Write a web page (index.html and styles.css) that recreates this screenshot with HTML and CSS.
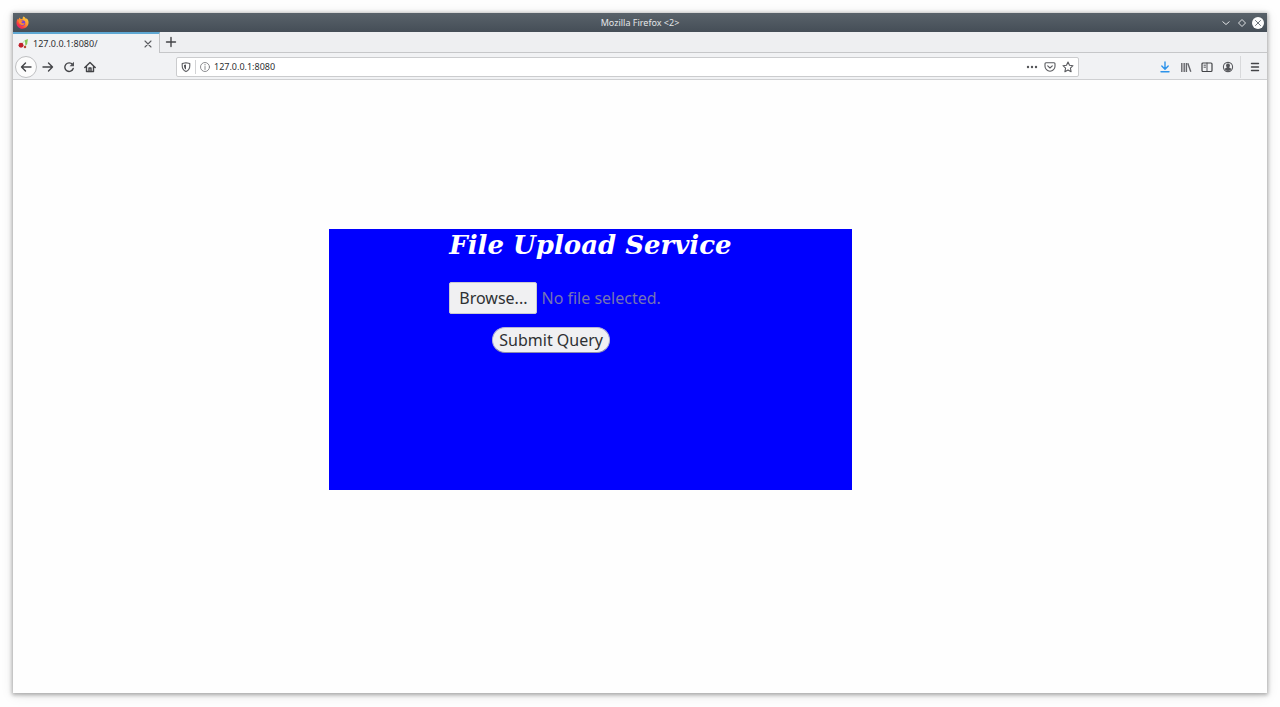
FILE: index.html
```html
<!DOCTYPE html>
<html lang="en">
<head>
<meta charset="utf-8">
<meta name="viewport" content="width=device-width, initial-scale=1">
<title>File Upload Service</title>
<link rel="stylesheet" href="styles.css">
</head>
<body>
<div class="window">
  <header class="titlebar">
    <svg class="logo" viewBox="0 0 16 16" aria-hidden="true">
      <defs>
        <linearGradient id="fire" x1="1" y1="0" x2="0.2" y2="1">
          <stop offset="0" stop-color="#ffe64a"/><stop offset="0.45" stop-color="#ff9a2e"/><stop offset="0.8" stop-color="#f8393f"/><stop offset="1" stop-color="#e31587"/>
        </linearGradient>
      </defs>
      <path fill="url(#fire)" d="M9.2.6c1.8 1 2.600 2 3 3.100.5-.1.700-.4.700-.9C14.900 4.500 15.700 6.600 15.400 9c-.5 4-3.700 6.600-7.500 6.600C3.700 15.600.6 12.500.6 8.500c0-2.100.7-4 1.700-5.200 0 .6.2 1 .5 1.300C3.200 3.400 4 2.400 4.900 1.900c0 .9.300 1.500.9 1.900L8 4.100C8 2.900 8.300 1.500 9.200.6Z"/>
      <circle cx="8" cy="8.600" r="3.400" fill="#7542d8"/>
      <path fill="#ff8b2c" d="M3.200 5.300c1.500-.7 3-.4 4 .5l1.500.1c-.2 1-1.800 1.200-1.900 1.700-.1.900.8 1.700 2 1.400 1-.2 1.500-.3 1.900.1-.7 1.600-2.400 2.300-4 1.900C4.500 10.500 3.100 8.500 3.200 5.300Z"/>
    </svg>
    <div class="window-title">Mozilla Firefox &lt;2&gt;</div>
    <div class="window-controls">
      <button aria-label="Minimize"><svg viewBox="0 0 12 12"><path d="m2.500 4.500 3.500 3 3.500-3"/></svg></button>
      <button aria-label="Maximize"><svg viewBox="0 0 12 12"><path d="m6 2.500 3.500 3.500L6 9.500 2.500 6Z"/></svg></button>
      <button aria-label="Close"><svg viewBox="0 0 12 12"><circle class="disc" cx="6" cy="6" r="6"/><path class="cross" d="m3.200 3.200 5.600 5.600m0-5.600L3.200 8.800"/></svg></button>
    </div>
  </header>

  <nav class="tabs" aria-label="Tabs">
    <div class="tab">
      <svg class="favicon" viewBox="0 0 12 12" aria-hidden="true">
        <path d="M3.500 7C5 5.500 6 3.500 8.500 2.500" fill="none" stroke="#a9cf8c" stroke-width=".8"/>
        <path d="M7.500 2.500 10.800 1 10 6.500 8.200 9Z" fill="#85c653"/>
        <circle cx="3.300" cy="7.800" r="2.700" fill="#c0202b"/><circle cx="7.600" cy="9.800" r="1.400" fill="#b84a38"/>
      </svg>
      <span class="tab-title">127.0.0.1:8080/</span>
      <button aria-label="Close tab"><svg class="icon thin" viewBox="0 0 12 12"><path d="m3 3 6 6m0-6L3 9"/></svg></button>
    </div>
    <button class="new-tab" aria-label="New tab"><svg class="icon" viewBox="0 0 12 12"><path d="M6 1.500v9M1.500 6h9"/></svg></button>
  </nav>

  <div class="toolbar">
    <div class="navigation">
      <button class="back" aria-label="Back"><svg class="icon" viewBox="0 0 12 12"><path d="M11 6H1.500M5.500 2l-4 4 4 4"/></svg></button>
      <button aria-label="Forward"><svg class="icon" viewBox="0 0 12 12"><path d="M1 6h9.500M6.500 2l4 4-4 4"/></svg></button>
      <button aria-label="Reload"><svg class="icon" viewBox="0 0 12 12"><path d="M9.500 3.500A4.300 4.300 0 1 0 10.200 7.500"/><path class="solid" d="M11 .8v4.400H6.600Z"/></svg></button>
      <button aria-label="Home"><svg class="icon" viewBox="0 0 12 12"><path d="m.8 6.500 5.200-5 5.200 5M2.500 5.500v5h7v-5"/><path d="M5 10.500V7h2v3.500"/></svg></button>
    </div>
    <div class="address">
      <button aria-label="Tracking protection"><svg class="icon thin" viewBox="0 0 12 12"><path d="M6 1.700 9.800 2.500v2.300C9.800 7.600 8.600 9.500 6 10.600 3.400 9.500 2.200 7.600 2.200 4.800V2.500Z"/><path class="solid" d="M6 3.400v5.200C4.600 7.800 4 6.500 4 3.900Z"/></svg></button>
      <span class="divider"></span>
      <button aria-label="Site information"><svg class="icon hairline" viewBox="0 0 12 12"><circle cx="6" cy="6" r="4.500"/><path d="M6 5.500v3M6 3.400v.6"/></svg></button>
      <input class="url" type="text" value="127.0.0.1:8080" aria-label="Address">
      <div class="page-actions">
        <button aria-label="Page actions"><svg class="icon" viewBox="0 0 12 12"><g class="solid"><circle cx="2" cy="6" r="1.200"/><circle cx="6" cy="6" r="1.200"/><circle cx="10" cy="6" r="1.200"/></g></svg></button>
        <button aria-label="Save to Pocket"><svg class="icon thin" viewBox="0 0 12 12"><path d="M2 1.800h8q1 0 1 1v2.400a5 5 0 0 1-10 0V2.800q0-1 1-1ZM3.700 4.800 6 7l2.300-2.200"/></svg></button>
        <button aria-label="Bookmark"><svg class="icon thin" viewBox="0 0 12 12"><path d="m6 1 1.500 3.300 3.500.4-2.600 2.400.7 3.600L6 8.900l-3.100 1.800.7-3.600L1 4.700l3.500-.4Z"/></svg></button>
      </div>
    </div>
    <div class="tools">
      <button aria-label="Downloads"><svg class="icon download" viewBox="0 0 12 12"><path d="M6 1v7M2.800 5 6 8.200 9.200 5M2 10.800h8"/></svg></button>
      <button aria-label="Library"><svg class="icon library" viewBox="0 0 12 12"><path d="M1.800 2v9M4.200 2v9M6.400 2v9M7.800 2.200l3 8.600"/></svg></button>
      <button aria-label="Sidebars"><svg class="icon sidebar" viewBox="0 0 12 12"><rect x="1" y="2" width="10" height="8.500" rx="1"/><path class="detail" d="M6 2v8.500M3 4.200h1.500M3 6.200h1.500"/></svg></button>
      <button aria-label="Account"><svg class="icon thin" viewBox="0 0 12 12"><circle cx="6" cy="6" r="4.600"/><path class="solid" d="M6 2.500a2 2 0 0 1 1.400 3.400v.8l2.200 1A4 4 0 0 1 2.400 7.700l2.200-1v-.8A2 2 0 0 1 6 2.500Z"/></svg></button>
      <button class="menu" aria-label="Menu"><svg class="icon" viewBox="0 0 12 12"><path d="M2.500 2.500h7M2.500 6h7M2.500 9.500h7"/></svg></button>
    </div>
  </div>

  <main class="page">
    <section class="upload">
      <form class="upload-form">
        <h1>File Upload Service</h1>
        <div class="file-row">
          <input class="file-input" type="file" id="file">
          <label class="browse" for="file">Browse...</label>
          <span class="file-name">No file selected.</span>
        </div>
        <button class="submit" type="submit">Submit Query</button>
      </form>
    </section>
  </main>
</div>
</body>
</html>
```
FILE: styles.css
```css
* { box-sizing: border-box; }

body {
  margin: 0;
  min-height: 100vh;
  padding: 13px 13px 14px;
  display: flex;
  background: #fefefe;
  color: #2e3033;
  font: 9px/12px "Noto Sans", sans-serif;
}

button {
  display: grid;
  place-items: center;
  margin: 0;
  padding: 0;
  border: 0;
  background: none;
  color: inherit;
  font: inherit;
}

.window {
  flex: 1;
  display: flex;
  flex-direction: column;
  background: #fff;
  box-shadow: 0 1px 4px 1px rgba(0, 0, 0, .3), 0 2px 12px rgba(0, 0, 0, .1);
}

.titlebar {
  display: grid;
  grid-template-columns: 1fr auto 1fr;
  align-items: center;
  height: 19px;
  padding: 0 3px;
  background: linear-gradient(#59626a, #454e57);
  color: #e4e6e8;
}

.logo { width: 13px; height: 13px; }

.window-controls {
  display: flex;
  justify-content: flex-end;
  gap: 4px;
}

.window-controls svg {
  display: block;
  width: 12px;
  height: 12px;
  fill: none;
  stroke: #e0e2e4;
}

.window-controls .disc { fill: #fcfcfc; stroke: none; }
.window-controls .cross { stroke: #6d757c; }

.icon {
  display: block;
  width: 12px;
  height: 12px;
  fill: none;
  stroke: #434447;
  stroke-width: 1.4;
  stroke-linecap: round;
  stroke-linejoin: round;
}

.thin { stroke-width: 1.1; stroke: #5a5b5f; }
.hairline { stroke-width: .9; stroke: #808185; }
.icon .solid { fill: #535458; stroke: none; }
.download { stroke: #2d93ea; }
.library { stroke: #66676b; stroke-linecap: butt; }
.sidebar { stroke-width: 1.2; }
.sidebar .detail { stroke-width: .9; }

.tabs {
  display: flex;
  height: 21px;
  background: #eeeff1;
}

.tab {
  display: flex;
  align-items: center;
  gap: 4px;
  width: 147px;
  padding: 0 5px;
  border-top: 2px solid #5fa8d3;
  border-right: 1px solid #c3c4c6;
  background: #f1f2f4;
}

.favicon { width: 11px; height: 11px; }
.tab-title { flex: 1; }

.new-tab { width: 21px; }

.tabs::after,
.new-tab { border-bottom: 1px solid #c6c7c9; }

.tabs::after { content: ""; flex: 1; }

.toolbar {
  display: flex;
  align-items: center;
  height: 27px;
  padding: 1px 6px 0 2px;
  border-bottom: 1px solid #cfd0d2;
  background: #f1f2f4;
}

.navigation {
  display: flex;
  align-items: center;
  gap: 9px;
  width: 161px;
}

.back {
  width: 22px;
  height: 22px;
  margin-right: -4px;
  border: 1px solid #bfc0c2;
  border-radius: 50%;
  background: #fcfcfc;
}

.address {
  flex: 1;
  display: flex;
  align-items: center;
  gap: 3px;
  height: 20px;
  padding: 0 4px 0 3px;
  border: 1px solid #cbccce;
  border-radius: 2px;
  background: #fff;
}

.divider {
  width: 1px;
  height: 14px;
  background: #d2d3d5;
}

.url {
  flex: 1;
  min-width: 0;
  padding: 0;
  border: 0;
  outline: 0;
  background: none;
  color: inherit;
  font: inherit;
}

.page-actions { display: flex; gap: 6px; }

.tools {
  display: flex;
  align-items: center;
  justify-content: flex-end;
  gap: 9px;
  width: 182px;
}

.menu {
  height: 22px;
  margin-left: -3px;
  padding-left: 8px;
  border-left: 1px solid #d8d9db;
}

.page {
  flex: 1;
  padding-top: 149px;
  background: #fefefe;
}

.upload {
  width: 41.7%;
  min-height: 261px;
  margin-left: 25.2%;
  background: #00f;
}

.upload-form {
  width: fit-content;
  margin: 0 auto;
  font-size: 16px;
  line-height: 24px;
}

h1 {
  margin: 0 0 21px;
  color: #fff;
  font: italic bold 26px/32px "DejaVu Serif", serif;
}

.file-row {
  position: relative;
  display: flex;
  align-items: center;
  gap: 4px;
  margin-bottom: 13px;
}

.file-input {
  position: absolute;
  width: 1px;
  height: 1px;
  opacity: 0;
}

.browse {
  padding: 3px 9px;
  border: 1px solid #c9c9d2;
  border-radius: 2px;
  background: #f0f0f2;
}

.file-name { color: #7474b4; }

.submit {
  margin-left: 43px;
  padding: 0 6px;
  border: 1px solid #b4b4d4;
  border-bottom-color: #8c8cae;
  border-radius: 13px;
  background: #f0f0f2;
}
```
